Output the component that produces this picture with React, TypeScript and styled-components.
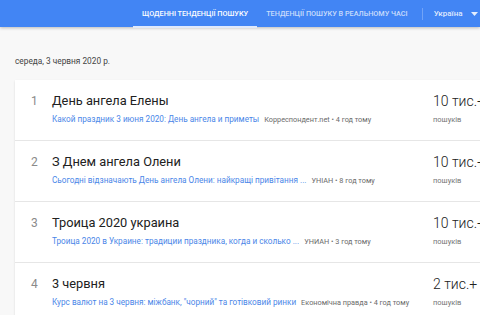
import React from 'react';
import styled, {createGlobalStyle} from 'styled-components';

const GlobalStyle = createGlobalStyle`
  html, body {
    margin: 0;
    padding: 0;
    background-color: #f8f8f8;
    font-family: Roboto, "Liberation Sans", Arial, sans-serif;
    overflow: hidden;
  }
  #root {
    width: 480px;
    height: 315px;
    overflow: hidden;
  }
`

const Header = styled.header`
  height: 27px;
  background-color: #4285f4;
  box-shadow: 0 1px 3px rgba(0, 0, 0, 0.25);
  display: flex;
  align-items: stretch;
  padding-left: 133px;
  position: relative;
  z-index: 1;
`
const Tab = styled.div<{active?: boolean}>`
  display: flex;
  align-items: center;
  padding: 0 9px;
  font-size: 7.25px;
  font-weight: 500;
  text-transform: uppercase;
  color: ${p => p.active ? '#ffffff' : 'rgba(255, 255, 255, 0.72)'};
  border-bottom: 2px solid ${p => p.active ? '#dfe9fb' : 'transparent'};
  margin-bottom: -1px;
  white-space: nowrap;
`
const Divider = styled.div`
  width: 1px;
  height: 12px;
  align-self: center;
  background-color: rgba(255, 255, 255, 0.25);
  margin-left: 5px;
`
const Country = styled.div`
  display: flex;
  align-items: center;
  gap: 8px;
  margin-left: 11px;
  font-size: 8px;
  font-weight: 500;
  color: rgba(255, 255, 255, 0.85);
  white-space: nowrap;
`
const Main = styled.main`
  padding: 0 0 0 15px;
`
const DateLabel = styled.div`
  height: 53px;
  display: flex;
  align-items: center;
  padding-top: 14px;
  box-sizing: border-box;
  font-size: 8.3px;
  color: #444;
`
const Card = styled.div`
  width: 500px;
  background-color: #ffffff;
  box-shadow: 0 1px 2px rgba(0, 0, 0, 0.12);
`
const Row = styled.div`
  height: 61px;
  display: flex;
  align-items: flex-start;
  box-sizing: border-box;
  padding-top: 13px;
  border-bottom: 1px solid #e6e6e6;
`
const Index = styled.div`
  width: 37px;
  padding-left: 16px;
  box-sizing: border-box;
  font-size: 12px;
  color: #8a8a8a;
  line-height: 16px;
`
const Details = styled.div`
  width: 381px;
  display: flex;
  flex-direction: column;
  gap: 3px;
`
const Title = styled.div`
  font-size: 12.8px;
  color: #212121;
  line-height: 16px;
`
const Meta = styled.div`
  display: flex;
  align-items: baseline;
  gap: 5px;
  line-height: 14px;
`
const Article = styled.span`
  white-space: nowrap;
  font-size: 8.2px;
  color: #4a86e8;
`
const Source = styled.span`
  font-size: 7.3px;
  color: #6b6b6b;
  white-space: nowrap;
`
const Volume = styled.div`
  display: flex;
  flex-direction: column;
  gap: 4px;
`
const Count = styled.div`
  font-size: 14px;
  font-weight: 300;
  color: #212121;
  line-height: 16px;
  white-space: nowrap;
`
const Label = styled.div`
  font-size: 7.5px;
  color: #757575;
  line-height: 13px;
`

const items = [
    {
        title: 'День ангела Елены',
        article: 'Какой праздник 3 июня 2020: День ангела и приметы',
        source: 'Корреспондент.net • 4 год тому',
        count: '10 тис.+',
    },
    {
        title: 'З Днем ангела Олени',
        article: 'Сьогодні відзначають День ангела Олени: найкращі привітання ...',
        source: 'УНІАН • 8 год тому',
        count: '10 тис.+',
    },
    {
        title: 'Троица 2020 украина',
        article: 'Троица 2020 в Украине: традиции праздника, когда и сколько ...',
        source: 'УНИАН • 3 год тому',
        count: '10 тис.+',
    },
    {
        title: '3 червня',
        article: 'Курс валют на 3 червня: міжбанк, "чорний" та готівковий ринки',
        source: 'Економічна правда • 4 год тому',
        count: '2 тис.+',
    },
]

const App: React.FC = () => {
    return (
        <>
            <GlobalStyle/>
            <Header>
                <Tab active>Щоденні тенденції пошуку</Tab>
                <Tab>Тенденції пошуку в реальному часі</Tab>
                <Divider/>
                <Country>
                    Україна
                    <svg width="7" height="4" viewBox="0 0 7 4">
                        <path d="M0 0 L7 0 L3.5 4 Z" fill="rgba(255,255,255,0.85)"/>
                    </svg>
                </Country>
            </Header>
            <Main>
                <DateLabel>середа, 3 червня 2020 р.</DateLabel>
                <Card>
                    {items.map((item, i) => (
                        <Row key={i}>
                            <Index>{i + 1}</Index>
                            <Details>
                                <Title>{item.title}</Title>
                                <Meta>
                                    <Article>{item.article}</Article>
                                    <Source>{item.source}</Source>
                                </Meta>
                            </Details>
                            <Volume>
                                <Count>{item.count}</Count>
                                <Label>пошуків</Label>
                            </Volume>
                        </Row>
                    ))}
                </Card>
            </Main>
        </>
    );
}

export default App
